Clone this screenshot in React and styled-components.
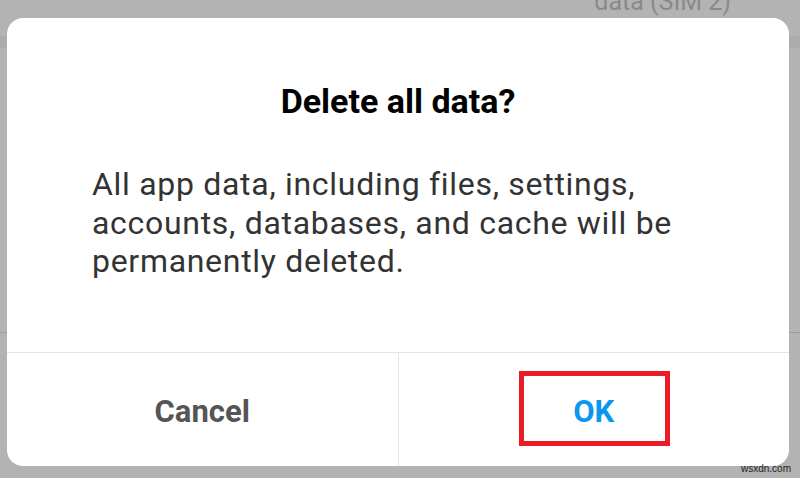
import React from "react";
import styled, { createGlobalStyle } from "styled-components";

const GlobalStyle = createGlobalStyle`
  html, body {
    margin: 0;
    padding: 0;
    background: #b3b3b3;
    overflow: hidden;
  }
  * {
    box-sizing: border-box;
  }
`;

const Screen = styled.div`
  position: relative;
  width: 800px;
  height: 478px;
  background: #b3b3b3;
  font-family: Roboto, "Noto Sans", sans-serif;
  overflow: hidden;
`;

const SettingsRow = styled.div`
  height: 36px;
  display: flex;
  justify-content: flex-end;
  padding-right: 69px;
`;

const RowValue = styled.span`
  margin-top: -11px;
  font-size: 25px;
  line-height: 25px;
  color: #8a8a8a;
`;

const Band = styled.div`
  height: 12px;
  background: #acacac;
`;

const RowBody = styled.div`
  height: 285px;
  border-bottom: 1px solid #9c9c9c;
`;

const Dialog = styled.div`
  position: absolute;
  left: 7px;
  top: 18px;
  width: 782px;
  height: 448px;
  background: #fff;
  border-radius: 16px;
  display: flex;
  flex-direction: column;
  overflow: hidden;
`;

const Content = styled.div`
  height: 334px;
  padding: 63px 85px 0;
`;

const Title = styled.h2`
  margin: 0;
  text-align: center;
  font-size: 34px;
  line-height: 40px;
  font-weight: 700;
  color: #000;
`;

const Message = styled.p`
  margin: 44px 0 0;
  font-size: 32px;
  line-height: 38.5px;
  letter-spacing: 0.7px;
  font-weight: 400;
  color: #333;
`;

const Actions = styled.div`
  flex: 1;
  display: flex;
  border-top: 1px solid #e4e4e4;
`;

const ActionButton = styled.button`
  position: relative;
  flex: 1;
  display: flex;
  align-items: center;
  justify-content: center;
  padding: 4px 0 0;
  margin: 0;
  border: none;
  border-right: ${(p) => (p.divider ? "1px solid #e4e4e4" : "none")};
  background: transparent;
  font-family: Roboto, "Noto Sans", sans-serif;
  font-size: 31px;
  font-weight: 700;
  color: ${(p) => (p.primary ? "#0a97f0" : "#555")};
  cursor: pointer;
`;

const Highlight = styled.span`
  position: absolute;
  left: 50%;
  top: 50%;
  width: 151px;
  height: 75px;
  transform: translate(-75px, -39px);
  border: 5px solid #ec1c24;
  pointer-events: none;
`;

const Watermark = styled.span`
  position: absolute;
  right: 9px;
  bottom: 4px;
  font-family: "Liberation Sans", Arial, sans-serif;
  font-size: 10px;
  line-height: 10px;
  color: #222;
`;

export default function App() {
  return (
    <Screen>
      <GlobalStyle />
      <SettingsRow>
        <RowValue>data (SIM 2)</RowValue>
      </SettingsRow>
      <Band />
      <RowBody />

      <Dialog>
        <Content>
          <Title>Delete all data?</Title>
          <Message>
            All app data, including files, settings, accounts, databases, and
            cache will be permanently deleted.
          </Message>
        </Content>
        <Actions>
          <ActionButton divider>Cancel</ActionButton>
          <ActionButton primary>
            OK
            <Highlight />
          </ActionButton>
        </Actions>
      </Dialog>

      <Watermark>wsxdn.com</Watermark>
    </Screen>
  );
}
